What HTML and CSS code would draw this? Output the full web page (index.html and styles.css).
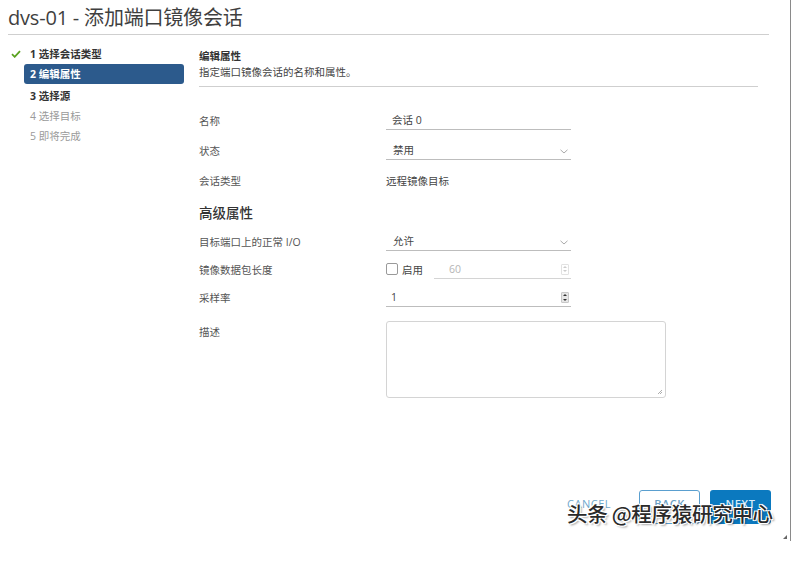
FILE: index.html
```html
<!DOCTYPE html>
<html lang="zh-CN">
<head>
<meta charset="utf-8">
<title>dvs-01 - 添加端口镜像会话</title>
<link rel="stylesheet" href="styles.css">
</head>
<body>
<div class="window">
  <h1 class="title">dvs-01 - 添加端口镜像会话</h1>
  <div class="main">
    <ul class="steps">
      <li class="step done"><svg class="check" width="10" height="8" viewBox="0 0 10 8"><path d="M1 4.2 L3.7 6.8 L9 1.2" fill="none" stroke="#5aa220" stroke-width="1.8"/></svg>1 选择会话类型</li>
      <li class="step active">2 编辑属性</li>
      <li class="step next">3 选择源</li>
      <li class="step todo">4 选择目标</li>
      <li class="step todo">5 即将完成</li>
    </ul>
    <div class="content">
      <div class="head">
        <div class="head-title">编辑属性</div>
        <div class="head-desc">指定端口镜像会话的名称和属性。</div>
      </div>
      <div class="form">
        <div class="row">
          <div class="label">名称</div>
          <div class="control line">会话 0</div>
        </div>
        <div class="row">
          <div class="label">状态</div>
          <div class="control line select">禁用<svg class="chev" width="8" height="5" viewBox="0 0 8 5"><path d="M0.5 0.8 L4 4 L7.5 0.8" fill="none" stroke="#aaa" stroke-width="1"/></svg></div>
        </div>
        <div class="row tall">
          <div class="label">会话类型</div>
          <div class="control plain">远程镜像目标</div>
        </div>
        <div class="row tall">
          <div class="section">高级属性</div>
        </div>
        <div class="row short">
          <div class="label">目标端口上的正常 I/O</div>
          <div class="control line select">允许<svg class="chev" width="8" height="5" viewBox="0 0 8 5"><path d="M0.5 0.8 L4 4 L7.5 0.8" fill="none" stroke="#aaa" stroke-width="1"/></svg></div>
        </div>
        <div class="row short">
          <div class="label">镜像数据包长度</div>
          <div class="control combo">
            <span class="checkbox"></span><span class="enable">启用</span>
            <span class="numbox disabled">60<span class="spin light"><i class="up"></i><i class="down"></i></span></span>
          </div>
        </div>
        <div class="row mid">
          <div class="label">采样率</div>
          <div class="control line num">1<span class="spin dark"><i class="up"></i><i class="down"></i></span></div>
        </div>
        <div class="row desc">
          <div class="label">描述</div>
          <div class="textarea"><svg class="grip" width="6" height="6" viewBox="0 0 6 6"><path d="M5 1 L1 5 M5 3 L3 5" stroke="#999" stroke-width="0.8"/></svg></div>
        </div>
      </div>
    </div>
  </div>
  <div class="footer">
    <span class="btn-link">CANCEL</span>
    <span class="btn outline">BACK</span>
    <span class="btn solid">NEXT</span>
  </div>
  <span class="resize"></span>
</div>
<div class="watermark">头条 @程序猿研究中心</div>
</body>
</html>
```
FILE: styles.css
```css
* { box-sizing: border-box; }
html, body { margin: 0; padding: 0; background: #fff; }
body {
  width: 793px;
  height: 572px;
  font-family: "Open Sans", "Noto Sans CJK SC", sans-serif;
  color: #444;
  position: relative;
  overflow: hidden;
}
.window {
  width: 791px;
  height: 541px;
  border-right: 1.5px solid #8a8a8a;
  padding-left: 8px;
  position: relative;
}
.title {
  margin: 0 21px 0 0;
  height: 35px;
  padding-top: 5px;
  font-size: 20px;
  line-height: 26px;
  font-weight: 400;
  color: #3f3f3f;
  border-bottom: 1px solid #cfcfcf;
  letter-spacing: -0.2px;
}
.main {
  display: flex;
  padding-top: 9px;
}
.steps {
  list-style: none;
  margin: 0;
  padding: 0 0 0 16px;
  width: 176px;
  flex: none;
}
.step {
  height: 20px;
  line-height: 20px;
  font-size: 10.5px;
  padding-left: 6px;
  position: relative;
  white-space: nowrap;
}
.step.done { font-weight: 700; color: #333; }
.step.done .check { position: absolute; left: -13px; top: 6px; }
.step.active {
  background: #2c5a8c;
  color: #fff;
  font-weight: 700;
  border-radius: 3px;
  margin-bottom: 2px;
}
.step.next { font-weight: 700; color: #333; }
.step.todo { color: #9a9a9a; }
.content {
  margin-left: 15px;
  flex: 1;
  padding-top: 4px;
}
.head {
  margin-right: 32px;
  border-bottom: 1px solid #cfcfcf;
  padding-bottom: 6px;
}
.head-title { font-size: 10.5px; font-weight: 700; color: #333; line-height: 16px; }
.head-desc { font-size: 10.5px; color: #444; line-height: 16px; }
.form { padding-top: 18px; }
.row {
  display: flex;
  align-items: center;
  height: 30px;
}
.row.tall { height: 31px; }
.row.short { height: 28px; }
.row.mid { height: 29px; }
.row.desc { align-items: flex-start; height: auto; margin-top: 9px; }
.row.desc .label { padding-top: 3px; }
.label {
  width: 187px;
  flex: none;
  font-size: 10.5px;
  color: #555;
}
.section { font-size: 13.5px; color: #333; font-weight: 500; }
.control {
  width: 185px;
  font-size: 10.5px;
  color: #444;
  position: relative;
}
.control.line {
  height: 19px;
  line-height: 18px;
  border-bottom: 1px solid #bdbdbd;
  padding-left: 6px;
}
.control.select { padding-left: 7px; }
.control.plain { padding-left: 0; }
.chev { position: absolute; right: 3px; top: 8px; }
.control.num { padding-left: 5px; }
.combo {
  display: flex;
  align-items: center;
  height: 19px;
}
.checkbox {
  width: 12px;
  height: 12px;
  border: 1px solid #9a9a9a;
  border-radius: 2px;
  flex: none;
}
.enable { margin-left: 4px; font-size: 10.5px; color: #444; }
.numbox {
  margin-left: 11px;
  flex: 1;
  height: 19px;
  line-height: 18px;
  border-bottom: 1px solid #d4d4d4;
  padding-left: 15px;
  color: #b5b5b5;
  position: relative;
}
.spin {
  position: absolute;
  right: 2px;
  top: 4px;
  width: 8px;
  height: 11px;
  display: flex;
  flex-direction: column;
  justify-content: space-around;
  align-items: center;
  border-radius: 1px;
}
.spin.light { border: 1px solid #e2e2e2; }
.spin.dark { background: #e6e6e6; border: 1px solid #c8c8c8; }
.spin i { display: block; width: 0; height: 0; border-left: 2.5px solid transparent; border-right: 2.5px solid transparent; }
.spin.light .up { border-bottom: 2.5px solid #ccc; }
.spin.light .down { border-top: 2.5px solid #ccc; }
.spin.dark .up { border-bottom: 2.5px solid #333; }
.spin.dark .down { border-top: 2.5px solid #333; }
.textarea {
  width: 280px;
  height: 77px;
  border: 1px solid #d4d4d4;
  border-radius: 3px;
  position: relative;
}
.grip { position: absolute; right: 2px; bottom: 2px; }
.footer {
  position: absolute;
  left: 0;
  right: 0;
  top: 490px;
  display: flex;
  justify-content: flex-end;
  align-items: center;
  padding-right: 19px;
  gap: 10px;
}
.btn-link {
  font-size: 11px;
  color: #6fa8cc;
  letter-spacing: 0.5px;
  margin-right: 18px;
  margin-top: -8px;
}
.btn {
  width: 61px;
  height: 34px;
  border-radius: 3px;
  font-size: 11px;
  letter-spacing: 0.5px;
  display: flex;
  align-items: center;
  justify-content: center;
  font-weight: 600;
  padding-bottom: 8px;
}
.btn.outline { border: 1px solid #5a9fcf; color: #6a9fc4; background: #fff; }
.btn.solid { background: #0b79bf; color: #d9ecf7; }
.resize {
  position: absolute;
  right: 3px;
  bottom: 2px;
  width: 0;
  height: 0;
  border-left: 4px solid transparent;
  border-bottom: 4px solid #666;
}
.watermark {
  position: absolute;
  left: 567px;
  top: 499px;
  font-family: "Noto Sans CJK SC", sans-serif;
  font-size: 20.5px;
  font-weight: 500;
  line-height: 28px;
  color: #2a2a2a;
  letter-spacing: -0.3px;
  text-shadow: 1px 1px 0 #fff, -1px -1px 0 #fff, 1px -1px 0 #fff, -1px 1px 0 #fff, 2px 2px 2px rgba(0,0,0,0.35);
  white-space: nowrap;
}
```
